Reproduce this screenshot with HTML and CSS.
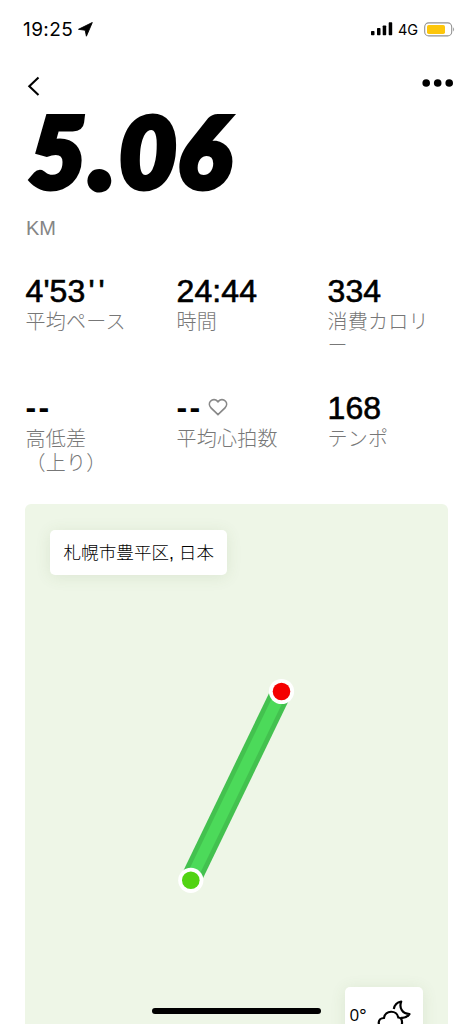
FILE: index.html
```html
<!DOCTYPE html>
<html lang="ja">
<head>
<meta charset="utf-8">
<meta name="viewport" content="width=device-width">
<title>5.06 KM</title>
<link rel="stylesheet" href="styles.css">
</head>
<body>
<div class="screen">
  <header class="status">
    <span class="clock">19:25</span>
    <svg class="location" width="15" height="15" viewBox="0 0 15 15"><path d="M14.3 .5 8.4 14.2 7.2 8.2.5 7.3Z" stroke="#000" stroke-width=".9" stroke-linejoin="round"/></svg>
    <svg class="signal" width="23" height="14" viewBox="0 0 23 14"><rect x="1" y="9" width="3.5" height="4.3" rx=".7"/><rect x="7" y="6" width="3.5" height="7.3" rx=".7"/><rect x="12.7" y="3.5" width="3.5" height="9.8" rx=".7"/><rect x="18.7" y=".3" width="3.5" height="13" rx=".7"/></svg>
    <span class="network">4G</span>
    <svg class="battery" width="32" height="15" viewBox="0 0 32 15"><rect x=".7" y=".9" width="27" height="13" rx="4" fill="#fff" stroke="#929292" stroke-width="1.1"/><rect x="3" y="3" width="18" height="9" rx="1.7" fill="#fdc60b"/><path d="M29.1 5.2q2 2.2 0 4.4Z" fill="#999"/></svg>
  </header>
  <nav class="nav">
    <svg class="back" width="13" height="20" viewBox="0 0 13 20"><path d="M11.500 1.500 2.300 10.200 11.500 19" fill="none" stroke="#000" stroke-width="2.1"/></svg>
    <svg class="more" width="32" height="8" viewBox="0 0 32 8"><circle cx="4.2" cy="4" r="3.8"/><circle cx="15.7" cy="4" r="3.8"/><circle cx="27.2" cy="4" r="3.8"/></svg>
  </nav>
  <section class="distance">
    <div class="number">5<span class="point">.</span>06</div>
    <div class="unit">KM</div>
  </section>
  <section class="stats">
    <div class="stat"><div class="value">4'53<span class="seconds">''</span></div><div class="label">平均ペース</div></div>
    <div class="stat"><div class="value">24:44</div><div class="label">時間</div></div>
    <div class="stat"><div class="value">334</div><div class="label">消費カロリ<br>ー</div></div>
    <div class="stat"><div class="value"><span class="empty">--</span></div><div class="label">高低差<br>（上り）</div></div>
    <div class="stat"><div class="value"><span class="empty">--</span><svg class="heart" width="20" height="18" viewBox="0 0 20 18"><path d="M10 16.6 3 9.8C1 7.8.9 4.8 2.7 3 4.6 1 7.6 1.1 9.4 3.1L10 3.8l.6-.7C12.4 1.1 15.4 1 17.3 3c1.800 1.800 1.700 4.800-.3 6.800Z" fill="none" stroke="#888" stroke-width="1.7"/></svg></div><div class="label">平均心拍数</div></div>
    <div class="stat"><div class="value">168</div><div class="label">テンポ</div></div>
  </section>
  <section class="map">
    <div class="place">札幌市豊平区, 日本</div>
    <svg class="route" width="423" height="520" viewBox="0 0 423 520">
      <path d="M256.5 187.500 165.5 376" stroke="#43c14f" stroke-width="21"/>
      <path d="M256.5 187.500 165.5 376" stroke="#4cda5a" stroke-width="11.5"/>
      <circle cx="256.5" cy="187.500" r="12.6" fill="#fff"/><circle cx="256.5" cy="187.500" r="8.8" fill="#f40000"/>
      <circle cx="165.8" cy="376.300" r="12.6" fill="#fff"/><circle cx="165.8" cy="376.300" r="8.8" fill="#51d313"/>
    </svg>
    <div class="weather"><span>0°</span><svg width="35" height="33" viewBox="0 0 35 33"><g fill="none" stroke="#000" stroke-width="2.2" stroke-linejoin="round"><path d="M7 27.500C-.5 26.500 .5 18 7 18 8 10 20 9.500 21.300 17.500c5 .5 5 9.500 0 10Z"/><path d="M16.800 9C17.500 5 20 2.300 24.200 1.500 21.800 8 25.500 14 32.500 14 30.500 16.800 27.500 18.300 24 17.800"/></g></svg></div>
  </section>
  <div class="home"></div>
</div>
</body>
</html>
```

FILE: styles.css
```css
* { box-sizing: border-box; }
body { margin: 0; background: #fff; color: #000; font-family: "Liberation Sans", "Noto Sans CJK JP", sans-serif; }
svg { display: block; flex: none; }
.screen { position: relative; width: 473px; height: 1024px; overflow: hidden; }
.status { display: flex; align-items: center; height: 58px; padding: 0 17px 0 23px; font-family: Inter, "Liberation Sans", sans-serif; }
.clock { width: 55px; font-size: 19px; letter-spacing: .4px; }
.signal { margin-left: auto; }
.network { width: 26px; margin-left: 5px; font-size: 14.5px; }
.nav { display: flex; justify-content: space-between; height: 50px; padding: 18px 19px 0 27px; }
.more { margin-top: 3px; }
.distance { height: 163px; padding-left: 29px; }
.number { height: 107px; font: italic 900 98px/84px Lato, sans-serif; letter-spacing: 1.5px; white-space: nowrap; -webkit-text-stroke: 6px #000; }
.point { margin: 0 4px 0 3px; -webkit-text-stroke-width: 8px; }
.unit { margin-left: -3px; font-size: 20px; line-height: 26px; color: #858585; }
.stats { display: grid; grid-template-columns: repeat(3, 151px); grid-template-rows: 117px 116px; height: 233px; padding-left: 26px; }
.stat { margin-left: -.5px; }
.value { display: flex; height: 38px; padding-top: 1px; font-size: 32px; line-height: 38px; -webkit-text-stroke: .6px #000; letter-spacing: .1px; }
.seconds { margin-left: 3px; letter-spacing: 4px; }
.empty { line-height: 37px; font-weight: bold; letter-spacing: 2.4px; -webkit-text-stroke: 0; }
.heart { margin: 8.5px 0 0 5px; }
.label { font-family: "Noto Sans CJK JP", sans-serif; font-size: 20px; font-weight: 300; line-height: 23.5px; letter-spacing: .25px; color: #777; white-space: nowrap; }
.map { position: relative; width: 423px; height: 520px; margin-left: 25px; overflow: hidden; border-radius: 6px 6px 0 0; background: #eef6e7; }
.place { position: absolute; left: 25px; top: 26px; width: 177px; height: 45px; padding-left: 13.5px; border-radius: 5px; background: #fff; box-shadow: 0 2px 16px #526c3a1c; font: 300 17.6px/46px "Liberation Sans", "Noto Sans CJK JP", sans-serif; white-space: nowrap; }
.weather { position: absolute; left: 319.5px; top: 483px; display: flex; width: 78px; height: 60px; padding: 13px 5px; border-radius: 5px; background: #fff; box-shadow: 0 2px 16px #526c3a1c; font: 400 17px/30px "Open Sans", sans-serif; }
.weather svg { margin-left: 10px; }
.home { position: absolute; left: 152px; top: 1007.5px; width: 169px; height: 6px; border-radius: 3px; background: #000; }
```
